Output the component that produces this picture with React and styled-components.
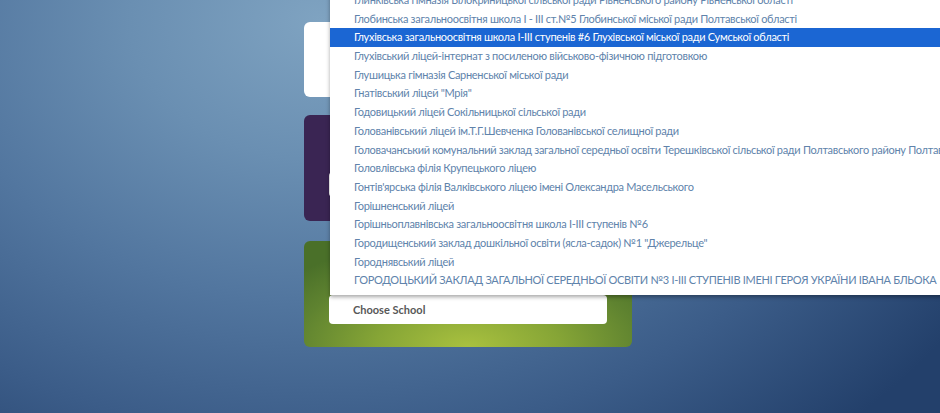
import React from "react";
import styled, { createGlobalStyle } from "styled-components";

const GlobalStyle = createGlobalStyle`
  html, body {
    margin: 0;
    padding: 0;
    overflow: hidden;
  }
  body {
    font-family: "Lato", "Open Sans", sans-serif;
  }
`;

const Page = styled.div`
  width: 100vw;
  height: 100vh;
  overflow: hidden;
  background: radial-gradient(
    ellipse 760px 560px at 320px 20px,
    #7fa3c1 0%,
    #6a8fb2 25%,
    #52769f 50%,
    #3b5c88 75%,
    #23406b 100%
  );
`;

const Column = styled.div`
  width: 328px;
  margin-left: 304px;
  padding-top: 22px;
  display: flex;
  flex-direction: column;
`;

const Card = styled.div`
  position: relative;
  height: ${(p) => p.$h}px;
  margin-bottom: ${(p) => p.$gap || 0}px;
  border-radius: 6px;
  background: ${(p) => p.$bg};
  padding: ${(p) => p.$pad || "0"};
  box-sizing: border-box;
`;

const Field = styled.div`
  position: relative;
  width: 278px;
  height: ${(p) => p.$h || 29}px;
  margin-left: 25px;
  background: #fff;
  border-radius: 4px;
  box-sizing: border-box;
  padding-left: 24px;
  display: flex;
  align-items: center;
  font-size: 11px;
  font-weight: 700;
  color: #585858;
`;

const Menu = styled.ul`
  position: absolute;
  left: 1px;
  bottom: 100%;
  margin: 0;
  padding: 0 0 5px 0;
  list-style: none;
  background: #fff;
  box-shadow: 0 2px 4px rgba(0, 0, 0, 0.35);
  z-index: 10;
  white-space: nowrap;
`;

const Item = styled.li`
  height: 18.7px;
  line-height: 18.7px;
  padding: 0 24px;
  font-size: 11px;
  font-weight: 400;
  letter-spacing: -0.3px;
  color: ${(p) => (p.$active ? "#ffffff" : "#6083ab")};
  background: ${(p) => (p.$active ? "#1b66d3" : "transparent")};
`;

const schools = [
  "Глеюватська загальноосвітня школа І-ІІІ ступенів",
  "Глинківська гімназія Білокриницької сільської ради Рівненського району Рівненської області",
  "Глобинська загальноосвітня школа І - ІІІ ст.№5 Глобинської міської ради Полтавської області",
  "Глухівська загальноосвітня школа І-ІІІ ступенів #6 Глухівської міської ради Сумської області",
  "Глухівський ліцей-інтернат з посиленою військово-фізичною підготовкою",
  "Глушицька гімназія Сарненської міської ради",
  "Гнатівський ліцей \"Мрія\"",
  "Годовицький ліцей Сокільницької сільської ради",
  "Голованівський ліцей ім.Т.Г.Шевченка Голованівської селищної ради",
  "Головачанський комунальний заклад загальної середньої освіти Терешківської сільської ради Полтавського району Полтавської області",
  "Головлівська філія Крупецького ліцею",
  "Гонтів'ярська філія Валківського ліцею імені Олександра Масельського",
  "Горішненський ліцей",
  "Горішньоплавнівська загальноосвітня школа І-ІІІ ступенів №6",
  "Городищенський заклад дошкільної освіти (ясла-садок) №1 \"Джерельце\"",
  "Городнявський ліцей",
  "ГОРОДОЦЬКИЙ ЗАКЛАД ЗАГАЛЬНОЇ СЕРЕДНЬОЇ ОСВІТИ №3 І-ІІІ СТУПЕНІВ ІМЕНІ ГЕРОЯ УКРАЇНИ ІВАНА БЛЬОКА",
];

const App = () => {
  return (
    <>
      <GlobalStyle />
      <Page>
        <Column>
          <Card $h={75} $gap={18} $bg="#ffffff" />
          <Card $h={106} $gap={20} $bg="#3a2553" $pad="57px 0 0 0">
            <Field $h={25} />
          </Card>
          <Card
            $h={106}
            $bg="radial-gradient(ellipse 230px 110px at 50% 100%, #a9c13f 0%, #86a536 40%, #5f8330 75%, #4a7029 100%)"
            $pad="54px 0 0 0"
          >
            <Field>
              Choose School
              <Menu>
                {schools.map((s, i) => (
                  <Item key={s} $active={i === 3}>
                    {s}
                  </Item>
                ))}
              </Menu>
            </Field>
          </Card>
        </Column>
      </Page>
    </>
  );
};

export default App;
